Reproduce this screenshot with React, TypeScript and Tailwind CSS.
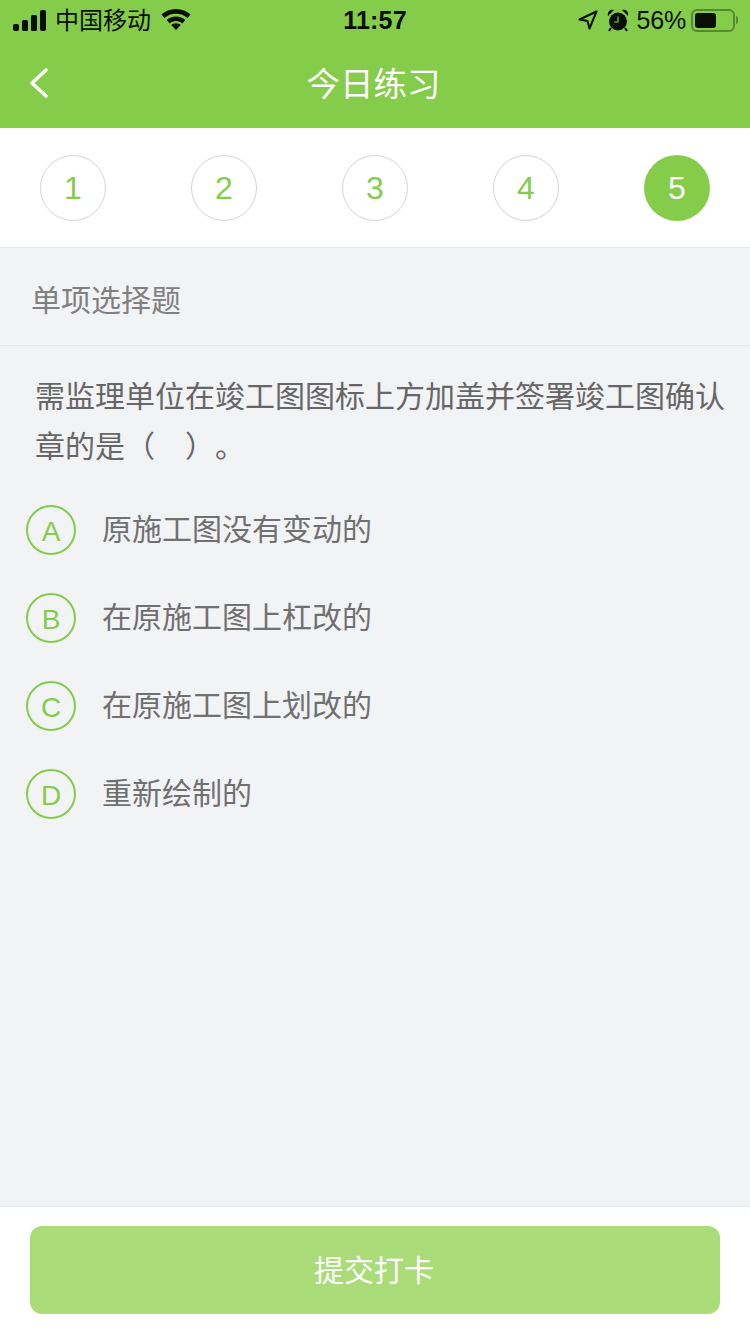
const cjk = { fontFamily: '"Noto Sans CJK SC", "Noto Sans", sans-serif' };
const latin = { fontFamily: '"Liberation Sans", "Noto Sans CJK SC", sans-serif' };

function Step({ n, active }: { n: number; active?: boolean }) {
  return (
    <div
      style={latin}
      className={
        active
          ? "w-[66px] h-[66px] rounded-full bg-[#85cc4b] text-white flex items-center justify-center text-[32px]"
          : "w-[66px] h-[66px] rounded-full bg-white border border-[#d4d4d4] text-[#85cc4b] flex items-center justify-center text-[32px]"
      }
    >
      {n}
    </div>
  );
}

function Option({ letter, text }: { letter: string; text: string }) {
  return (
    <div className="h-[88px] flex items-center pl-[26px]">
      <div
        style={latin}
        className="w-[50px] h-[50px] rounded-full border-2 border-[#85cc4b] text-[#85cc4b] flex items-center justify-center text-[28px] pt-[3px] shrink-0"
      >
        {letter}
      </div>
      <div style={cjk} className="ml-[26px] pb-[6px] text-[30px] leading-[40px] text-[#707070]">
        {text}
      </div>
    </div>
  );
}

export default function App() {
  return (
    <div className="w-[750px] h-[1334px] flex flex-col bg-[#f2f3f5] overflow-hidden">
      <header className="h-[128px] bg-[#85cc4b] shrink-0 flex flex-col">
        <div className="h-[40px] grid grid-cols-[1fr_auto_1fr] items-center text-[#0a0f05]">
          <div className="flex items-center pl-[13px]">
            <svg width="33" height="21" viewBox="0 0 33 21" fill="currentColor">
              <rect x="0" y="14" width="6" height="7" rx="2" />
              <rect x="9" y="10" width="6" height="11" rx="1.500" />
              <rect x="18" y="5" width="6" height="16" rx="1.500" />
              <rect x="27" y="0" width="6" height="21" rx="2" />
            </svg>
            <span style={cjk} className="ml-[9px] pb-[2px] text-[24px] leading-[30px]">中国移动</span>
            <svg className="ml-[10px] mb-[1px]" width="30" height="21" viewBox="0 0 30 21" fill="currentColor">
              <path d="M15 0C9.300 0 4.200 2.100 0.500 5.500l3 3.500C6.500 6.300 10.500 4.800 15 4.800s8.500 1.500 11.500 4.200l3-3.500C25.800 2.100 20.700 0 15 0z" />
              <path d="M15 7.500c-3.600 0-6.900 1.300-9.300 3.500l3 3.400c1.700-1.400 3.900-2.300 6.300-2.300s4.600 0.900 6.300 2.300l3-3.400C21.900 8.800 18.600 7.500 15 7.500z" />
              <path d="M15 14.300c-1.900 0-3.500 0.700-4.800 1.700l4.800 5 4.800-5c-1.300-1-2.900-1.700-4.800-1.700z" />
            </svg>
          </div>
          <span style={latin} className="text-[25px] leading-[32px] font-bold tracking-[0.2px]">11:57</span>
          <div className="justify-self-end flex items-center pr-[12px]">
            <svg className="mb-[1px]" width="20" height="20" viewBox="0 0 20 20" fill="none" stroke="currentColor" strokeWidth="2" strokeLinejoin="round">
              <path d="M18.500 1.500 1.500 9.500l8 1.500 2 7.500z" />
            </svg>
            <svg className="ml-[9px] mb-[1px]" width="22" height="24" viewBox="0 0 22 24" fill="currentColor">
              <circle cx="11" cy="13.500" r="9" />
              <path d="M1 8C0 4 3 1 7 2zM21 8c1-4-2-7-6-6z" />
              <path d="M4 20l-2 3M18 20l2 3" stroke="currentColor" strokeWidth="2" />
              <path d="M11 8.500v5.500H7" fill="none" stroke="#85cc4b" strokeWidth="1.200" />
            </svg>
            <span style={latin} className="ml-[8px] text-[25px] leading-[32px] tracking-[-0.2px]">56%</span>
            <div className="ml-[5px] w-[44px] h-[23px] rounded-[6px] border-2 border-[#558a2e] p-[2px] flex">
              <div className="w-[21px] rounded-[3px] bg-[#0a0f05]" />
            </div>
            <div className="ml-[1px] w-[2px] h-[8px] rounded-r bg-[#558a2e]" />
          </div>
        </div>
        <div className="h-[88px] relative flex items-center justify-center pb-[5px]">
          <svg className="absolute left-[28px] top-[27px]" width="22" height="32" viewBox="0 0 22 32" fill="none" stroke="white" strokeWidth="3.500" strokeLinecap="round" strokeLinejoin="round">
            <path d="M18 3 4 16l14 13" />
          </svg>
          <h1 style={cjk} className="mr-[3px] text-[33.500px] leading-[44px] text-white font-normal">今日练习</h1>
        </div>
      </header>

      <div className="h-[120px] bg-white shrink-0 flex items-center justify-between px-[40px] border-b border-[#e8e8e8]">
        <Step n={1} />
        <Step n={2} />
        <Step n={3} />
        <Step n={4} />
        <Step n={5} active />
      </div>

      <div style={cjk} className="h-[98px] shrink-0 flex items-center pl-[31px] pt-[4px] text-[30px] text-[#808080] border-b border-[#e6e7e9]">
        单项选择题
      </div>

      <div style={cjk} className="px-[35px] pt-[23px] text-[30px] leading-[50px] text-[#666666] [text-spacing-trim:space-all]">
        <div className="whitespace-nowrap">需监理单位在竣工图图标上方加盖并签署竣工图确认</div>
        <div className="whitespace-nowrap">
          章的是（<span className="inline-block w-[30px]" />）。
        </div>
      </div>

      <div className="mt-[17px] flex flex-col">
        <Option letter="A" text="原施工图没有变动的" />
        <Option letter="B" text="在原施工图上杠改的" />
        <Option letter="C" text="在原施工图上划改的" />
        <Option letter="D" text="重新绘制的" />
      </div>

      <footer className="mt-auto h-[128px] shrink-0 bg-white border-t border-[#e6e7e9] px-[30px] pt-[19px]">
        <button style={cjk} className="w-[690px] h-[88px] pb-[4px] pr-[2px] rounded-[12px] bg-[#aadc79] text-white text-[30px]">
          提交打卡
        </button>
      </footer>
    </div>
  );
}
